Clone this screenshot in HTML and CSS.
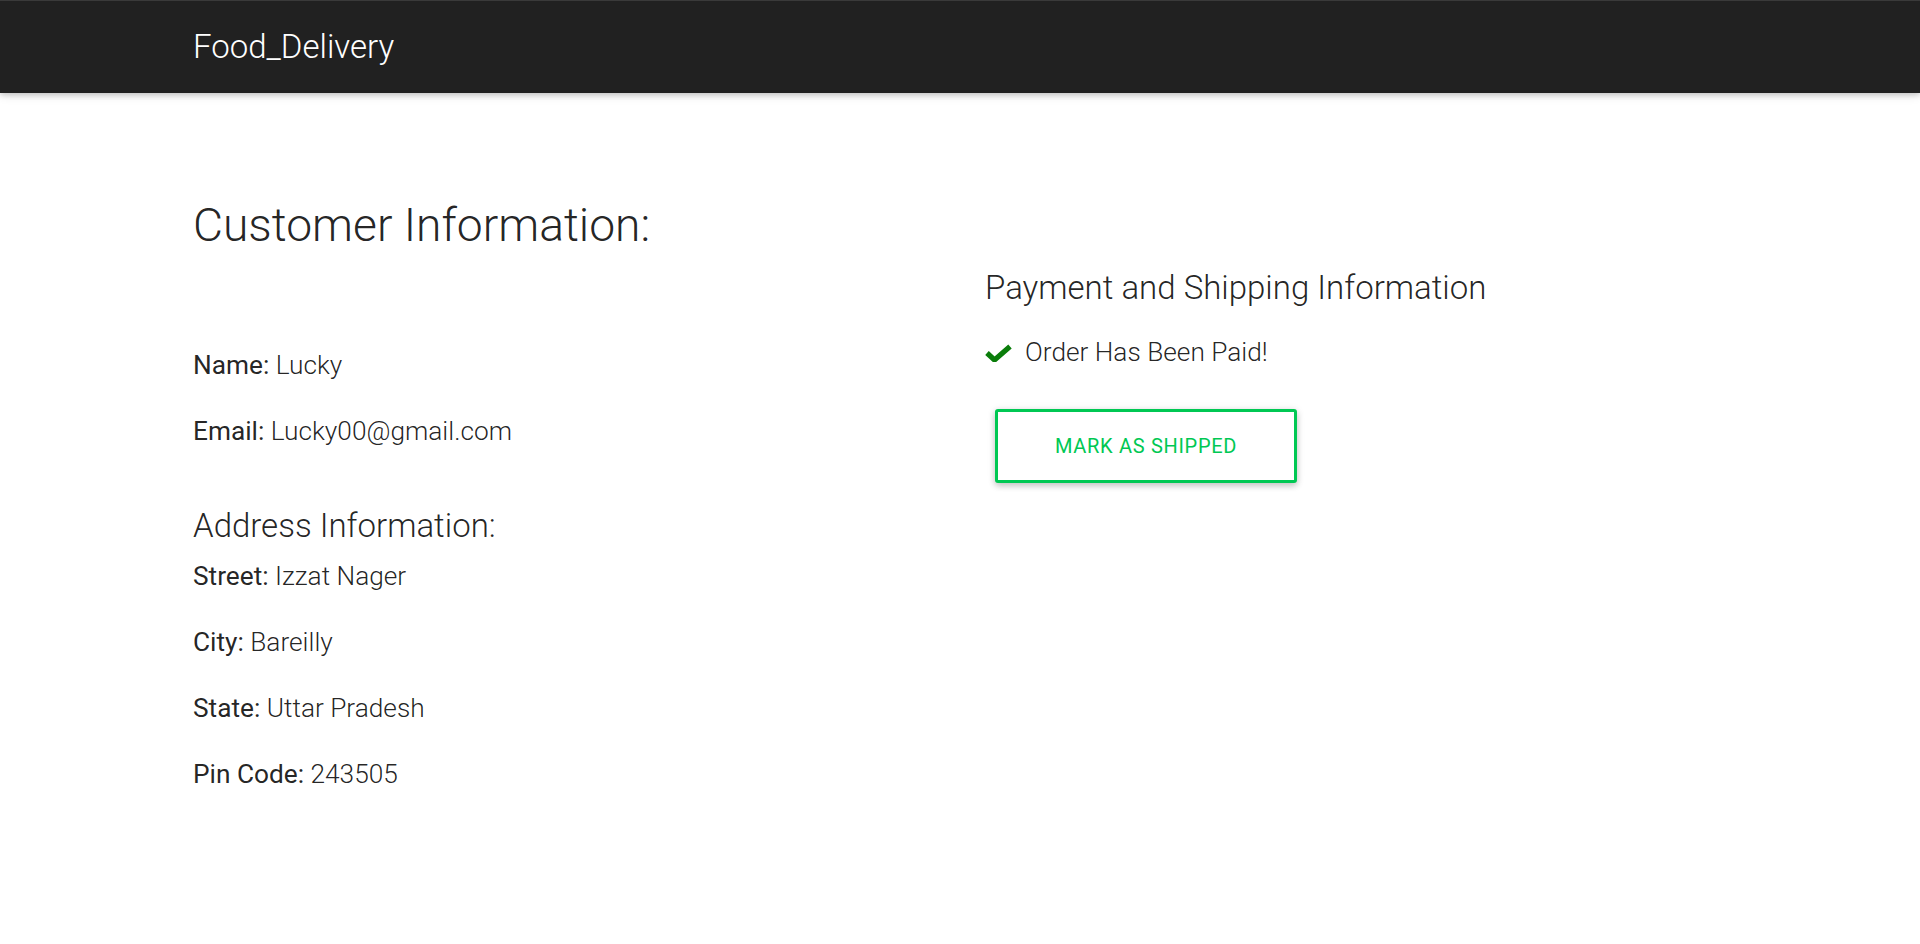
FILE: index.html
```html
<!DOCTYPE html>
<html lang="en">
<head>
<meta charset="utf-8">
<title>Food_Delivery</title>
<link rel="stylesheet" href="styles.css">
</head>
<body>
<nav class="navbar">
  <a class="brand" href="#">Food_Delivery</a>
</nav>
<main class="page">
  <section class="col col-left">
    <h4 class="title">Customer Information:</h4>
    <div class="fields fields-top">
      <p class="field"><span class="label">Name:</span> Lucky</p>
      <p class="field"><span class="label">Email:</span> Lucky00@gmail.com</p>
    </div>
    <h5 class="subtitle address-title">Address Information:</h5>
    <div class="fields">
      <p class="field"><span class="label">Street:</span> Izzat Nager</p>
      <p class="field"><span class="label">City:</span> Bareilly</p>
      <p class="field"><span class="label">State:</span> Uttar Pradesh</p>
      <p class="field"><span class="label">Pin Code:</span> 243505</p>
    </div>
  </section>
  <section class="col col-right">
    <h5 class="subtitle">Payment and Shipping Information</h5>
    <p class="paid">
      <svg class="check" width="27" height="18" viewBox="0 0 27 18" aria-hidden="true">
        <polyline points="2,9 9.5,16 25,2.5" fill="none" stroke="#0a7d0a" stroke-width="5.2" stroke-linejoin="miter" stroke-linecap="butt"/>
      </svg>
      <span>Order Has Been Paid!</span>
    </p>
    <button class="btn-ship" type="button">MARK AS SHIPPED</button>
  </section>
</main>
</body>
</html>
```

FILE: styles.css
```css
* { box-sizing: border-box; }

html, body {
  margin: 0;
  padding: 0;
  background: #ffffff;
}

body {
  font-family: Roboto, "Noto Sans", "Liberation Sans", sans-serif;
  color: rgba(0, 0, 0, 0.87);
  font-weight: 300;
}

.navbar {
  height: 93px;
  background: #212121;
  border-top: 1px solid #3a3a3a;
  box-shadow: 0 2px 5px 0 rgba(0, 0, 0, 0.16), 0 2px 10px 0 rgba(0, 0, 0, 0.12);
  display: flex;
  align-items: center;
  padding-left: 193px;
  position: relative;
  z-index: 2;
}

.brand {
  color: #ffffff;
  text-decoration: none;
  font-size: 33px;
  font-weight: 300;
  line-height: 92px;
}

.page {
  display: grid;
  grid-template-columns: 792px 1fr;
  padding: 107px 0 0 193px;
}

.col { min-width: 0; }

.title {
  margin: 0;
  font-size: 46.2px;
  font-weight: 300;
  line-height: 1.1;
}

.subtitle {
  margin: 0;
  font-size: 33px;
  font-weight: 300;
  line-height: 1.1;
}

.fields-top { margin-top: 95.6px; }

.field {
  margin: 0 0 26.3px;
  font-size: 26.25px;
  line-height: 39.4px;
}

.fields .field:last-child { margin-bottom: 0; }

.label { font-weight: 400; }

.address-title { margin: 56px 0 13.6px; }

.col-right { padding-top: 69.8px; }

.paid {
  margin: 27px 0 0;
  display: flex;
  align-items: center;
  gap: 13px;
  font-size: 26.25px;
  line-height: 39.4px;
}

.check { flex: none; }

.btn-ship {
  margin: 36.5px 0 0 10px;
  width: 302px;
  height: 74px;
  background: #ffffff;
  border: 3px solid #00c853;
  border-radius: 3px;
  color: #00c853;
  font-family: Roboto, "Noto Sans", "Liberation Sans", sans-serif;
  font-size: 20px;
  font-weight: 400;
  letter-spacing: 0.7px;
  box-shadow: 0 3px 6px 0 rgba(0, 0, 0, 0.18), 0 1px 8px 0 rgba(0, 0, 0, 0.1);
  cursor: pointer;
  padding: 0;
}
```
